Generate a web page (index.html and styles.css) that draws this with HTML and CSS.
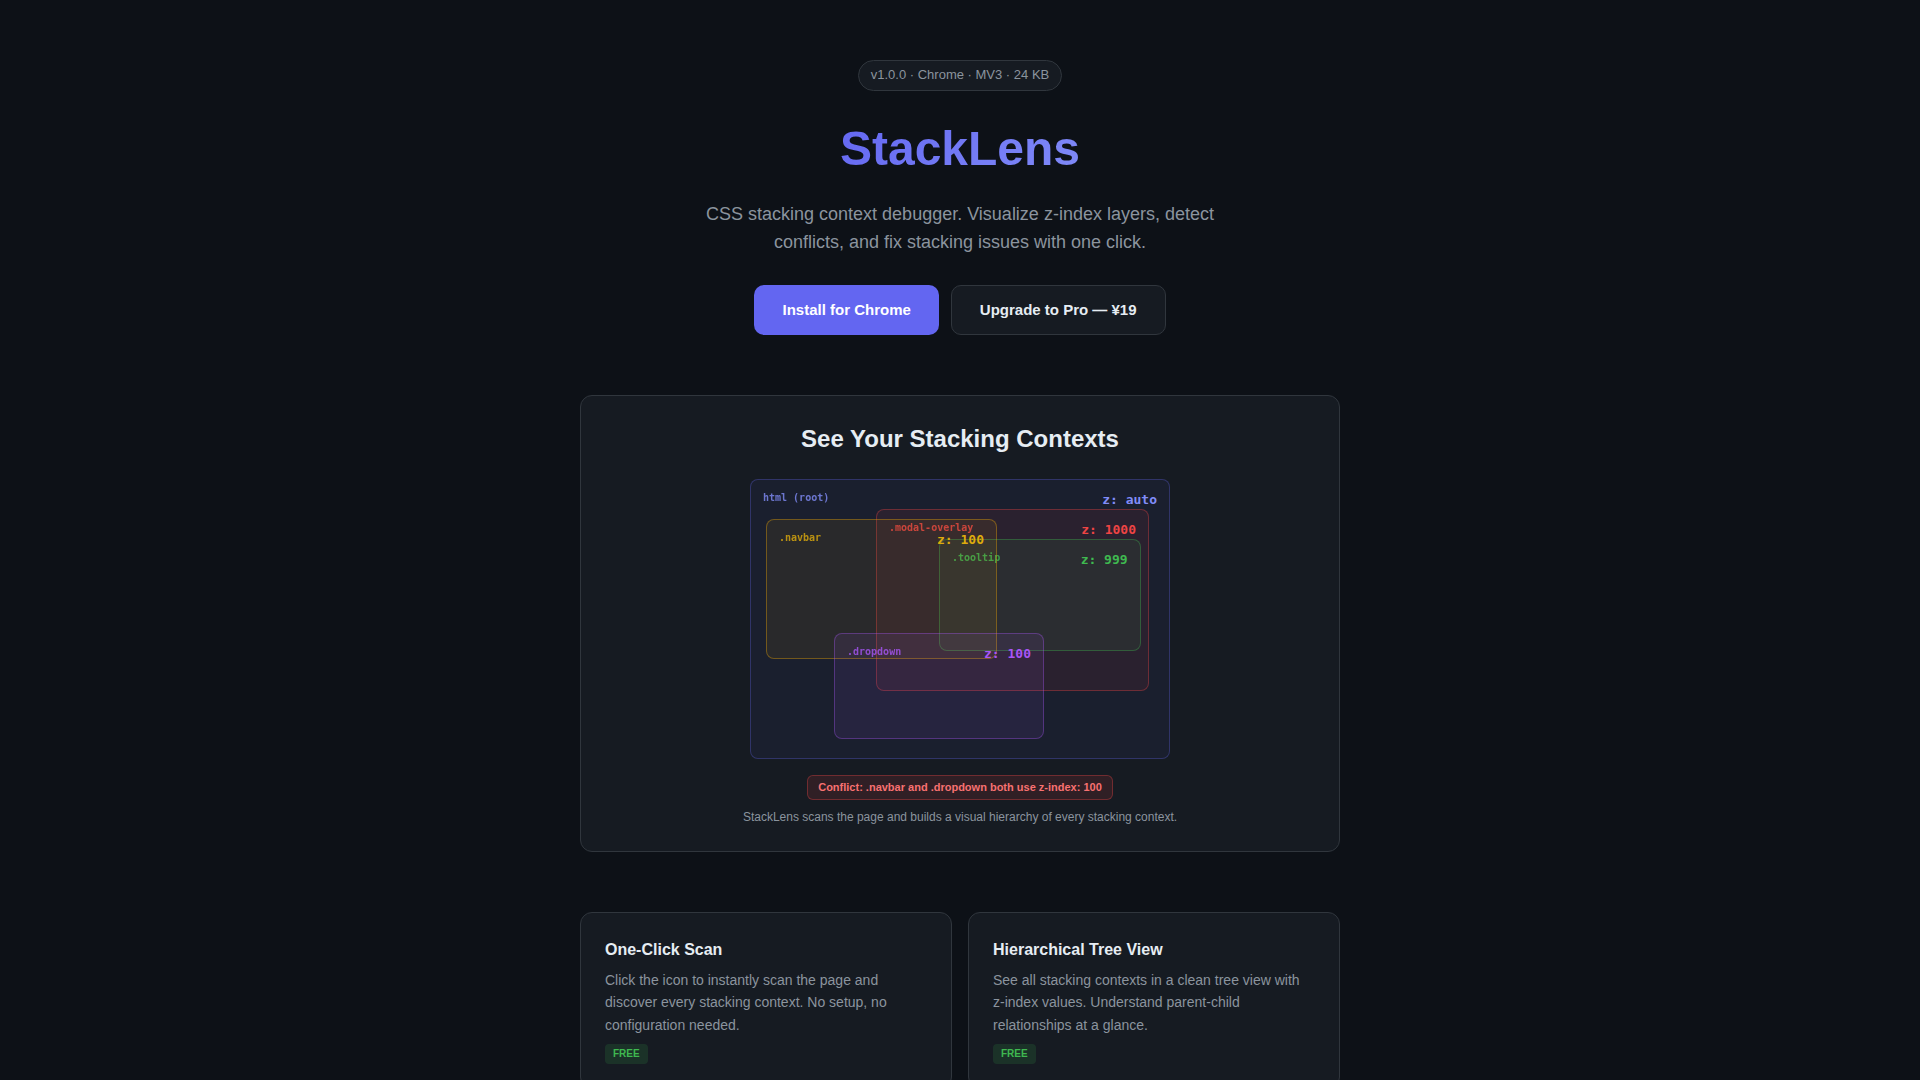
FILE: index.html
```html
<!DOCTYPE html>
<html lang="en">
<head>
<meta charset="utf-8">
<meta name="viewport" content="width=device-width, initial-scale=1">
<title>StackLens</title>
<link rel="stylesheet" href="styles.css">
</head>
<body>
<main class="container">
  <header class="hero">
    <span class="badge">v1.0.0 · Chrome · MV3 · 24 KB</span>
    <h1 class="title">StackLens</h1>
    <p class="tagline">CSS stacking context debugger. Visualize z-index layers, detect conflicts, and fix stacking issues with one click.</p>
    <div class="actions">
      <a class="btn btn-primary" href="#install">Install for Chrome</a>
      <a class="btn btn-secondary" href="#pro">Upgrade to Pro — ¥19</a>
    </div>
  </header>

  <section class="demo">
    <h2 class="demo-title">See Your Stacking Contexts</h2>
    <div class="stack">
      <div class="layer layer-root"><span class="name">html (root)</span><span class="z">z: auto</span></div>
      <div class="layer layer-modal"><span class="name">.modal-overlay</span><span class="z">z: 1000</span></div>
      <div class="layer layer-tooltip"><span class="name">.tooltip</span><span class="z">z: 999</span></div>
      <div class="layer layer-navbar"><span class="name">.navbar</span><span class="z">z: 100</span></div>
      <div class="layer layer-dropdown"><span class="name">.dropdown</span><span class="z">z: 100</span></div>
    </div>
    <div class="conflict">Conflict: .navbar and .dropdown both use z-index: 100</div>
    <p class="caption">StackLens scans the page and builds a visual hierarchy of every stacking context.</p>
  </section>

  <section class="features">
    <article class="card">
      <h3 class="card-title">One-Click Scan</h3>
      <p class="card-text">Click the icon to instantly scan the page and discover every stacking context. No setup, no configuration needed.</p>
      <span class="tag">FREE</span>
    </article>
    <article class="card">
      <h3 class="card-title">Hierarchical Tree View</h3>
      <p class="card-text">See all stacking contexts in a clean tree view with z-index values. Understand parent-child relationships at a glance.</p>
      <span class="tag">FREE</span>
    </article>
  </section>
</main>
</body>
</html>
```

FILE: styles.css
```css
* {
  box-sizing: border-box;
  margin: 0;
  padding: 0;
}

html {
  scrollbar-width: none;
}

body {
  background: #0d1117;
  color: #e6edf3;
  font-family: "Liberation Sans", Arial, sans-serif;
  line-height: 1.6;
}

.container {
  max-width: 800px;
  margin: 0 auto;
  padding: 0 20px 60px;
}

.hero {
  display: flex;
  flex-direction: column;
  align-items: center;
  padding: 60px 0;
  text-align: center;
}

.badge {
  padding: 4px 12px;
  border: 1px solid #30363d;
  border-radius: 20px;
  background: #161b22;
  color: #8b949e;
  font-size: 13px;
}

.title {
  margin: 20px 0 12px;
  background: linear-gradient(135deg, #6366f1, #818cf8);
  background-clip: text;
  color: transparent;
  font-size: 48px;
}

.tagline {
  max-width: 520px;
  margin-bottom: 28px;
  color: #8b949e;
  font-size: 18px;
}

.actions {
  display: flex;
  flex-wrap: wrap;
  justify-content: center;
  gap: 12px;
}

.btn {
  padding: 13px 28px;
  border-radius: 10px;
  font-size: 15px;
  font-weight: 600;
  text-decoration: none;
}

.btn-primary {
  background: #6366f1;
  color: #fff;
}

.btn-secondary {
  padding-block: 12px;
  border: 1px solid #30363d;
  background: #161b22;
  color: #e6edf3;
}

.demo {
  display: flex;
  flex-direction: column;
  align-items: center;
  padding: 24px;
  border: 1px solid #30363d;
  border-radius: 12px;
  background: #161b22;
  text-align: center;
}

.demo-title {
  margin-bottom: 20px;
  font-size: 24px;
}

.stack {
  position: relative;
  width: 100%;
  max-width: 420px;
  height: 280px;
  margin-bottom: 16px;
}

/* Each layer is placed freely over the ones before it. */
.layer {
  position: absolute;
  display: flex;
  align-items: flex-start;
  justify-content: space-between;
  padding: 8px 12px;
  border: 1px solid;
  border-radius: 8px;
  font-family: "DejaVu Sans Mono", monospace;
  font-weight: 700;
}

.name {
  font-size: 10px;
  line-height: 20px;
  opacity: 0.8;
}

.z {
  font-size: 13px;
  line-height: 24px;
}

.layer-root {
  inset: 0;
  border-color: rgba(99, 102, 241, 0.3);
  background: rgba(99, 102, 241, 0.06);
}

.layer-root .name,
.layer-root .z {
  color: #818cf8;
}

.layer-modal {
  top: 30px;
  left: 30%;
  width: 65%;
  height: 65%;
  border-color: rgba(239, 68, 68, 0.35);
  background: rgba(239, 68, 68, 0.08);
}

.layer-modal .name,
.layer-modal .z {
  color: #ef4444;
}

.layer-tooltip {
  top: 60px;
  left: 45%;
  width: 48%;
  height: 40%;
  border-color: rgba(63, 185, 80, 0.35);
  background: rgba(63, 185, 80, 0.08);
}

.layer-tooltip .name,
.layer-tooltip .z {
  color: #3fb950;
}

.layer-navbar {
  top: 40px;
  left: 16px;
  width: 55%;
  height: 50%;
  border-color: rgba(227, 160, 8, 0.4);
  background: rgba(227, 160, 8, 0.08);
}

.layer-navbar .name,
.layer-navbar .z {
  color: #deab0c;
}

.layer-dropdown {
  top: 55%;
  left: 20%;
  width: 50%;
  height: 38%;
  border-color: rgba(168, 85, 247, 0.35);
  background: rgba(168, 85, 247, 0.09);
}

.layer-dropdown .name,
.layer-dropdown .z {
  color: #a855f7;
}

.conflict {
  padding: 3px 10px;
  border: 1px solid rgba(239, 68, 68, 0.35);
  border-radius: 6px;
  background: rgba(239, 68, 68, 0.12);
  color: #f87171;
  font-size: 11px;
  font-weight: 600;
}

.caption {
  margin-top: 8px;
  color: #8b949e;
  font-size: 12px;
}

.features {
  display: grid;
  grid-template-columns: repeat(auto-fit, minmax(300px, 1fr));
  gap: 16px;
  margin-top: 60px;
}

.card {
  display: flex;
  flex-direction: column;
  align-items: flex-start;
  padding: 24px;
  border: 1px solid #30363d;
  border-radius: 12px;
  background: #161b22;
}

.card-title {
  margin-bottom: 6px;
  font-size: 16px;
}

.card-text {
  margin-bottom: 8px;
  color: #8b949e;
  font-size: 14px;
}

.tag {
  padding: 2px 8px;
  border-radius: 4px;
  background: rgba(63, 185, 80, 0.15);
  color: #3fb950;
  font-size: 10px;
  font-weight: 600;
}
```
